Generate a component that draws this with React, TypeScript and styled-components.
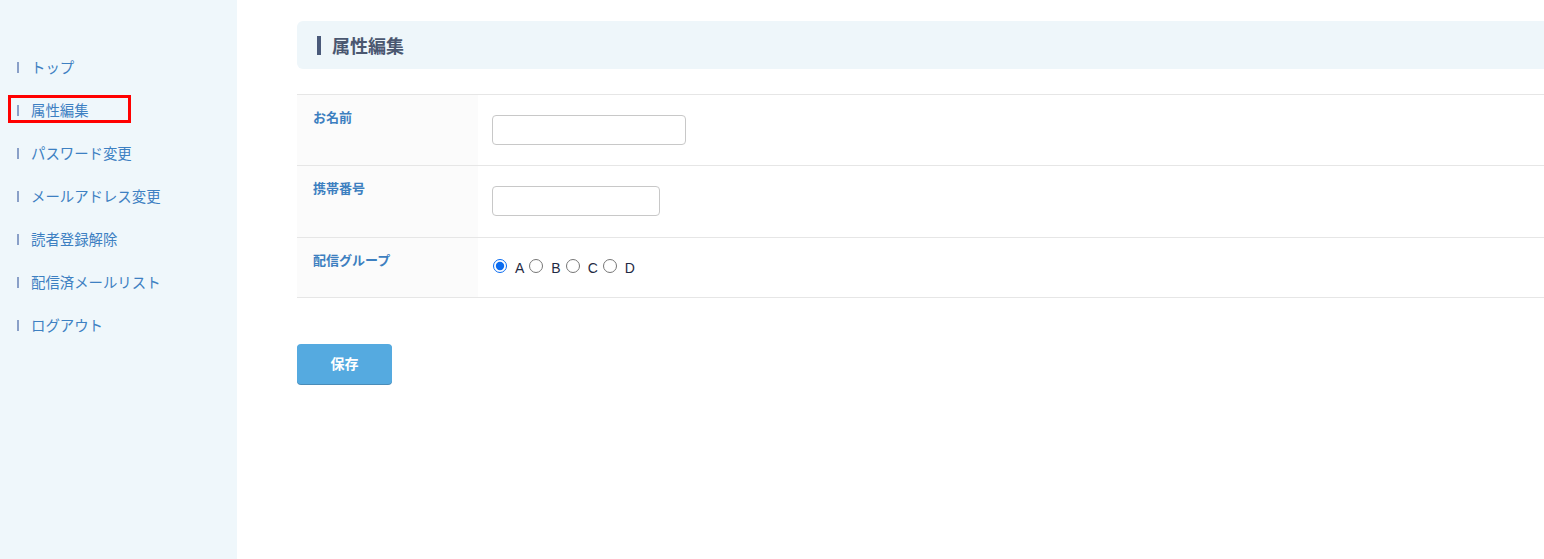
import React from "react";
import styled, { createGlobalStyle } from "styled-components";

const Global = createGlobalStyle`
  html, body { margin: 0; padding: 0; background: #fff; }
  body { font-family: "Noto Sans CJK JP", "Noto Sans", sans-serif; }
  * { box-sizing: border-box; }
`;

const Layout = styled.div`
  display: flex;
  width: 1544px;
  height: 559px;
  overflow: hidden;
`;

const Sidebar = styled.nav`
  width: 237px;
  flex: none;
  background: #eff7fb;
  padding-top: 53px;
`;

const NavList = styled.ul`
  list-style: none;
  margin: 0;
  padding: 0 0 0 9px;
  display: flex;
  flex-direction: column;
  align-items: flex-start;
  gap: 17px;
`;

const NavItem = styled.li<{ $active?: boolean }>`
  display: flex;
  align-items: center;
  width: ${(p) => (p.$active ? "121px" : "auto")};
  height: 26px;
  padding-left: 6px;
  font-size: 14.4px;
  color: #3d80c2;
  white-space: nowrap;
  outline: ${(p) => (p.$active ? "3px solid #f00" : "none")};
  outline-offset: -2px;
  &::before {
    content: "";
    flex: none;
    display: inline-block;
    width: 2px;
    height: 11px;
    margin: 3px 12px 0 2px;
    background: #8aa0c8;
  }
`;

const Main = styled.main`
  flex: 1;
  padding: 21px 0 0 60px;
  min-width: 0;
`;

const TitleBar = styled.div`
  height: 48px;
  background: #eef6fa;
  border-radius: 6px 0 0 6px;
  display: flex;
  align-items: center;
  padding-left: 20px;
  margin-right: -10px;
`;

const Title = styled.h2`
  margin: 0;
  font-size: 18px;
  font-weight: 700;
  color: #4a5770;
  display: flex;
  align-items: center;
  &::before {
    content: "";
    width: 4px;
    height: 19px;
    background: #4a5a7a;
    margin-right: 11px;
  }
`;

const Table = styled.div`
  margin-top: 25px;
  border-top: 1px solid #e6e6e6;
`;

const Row = styled.div<{ $h: number }>`
  display: grid;
  grid-template-columns: 181px 1fr;
  height: ${(p) => p.$h}px;
  border-bottom: 1px solid #e6e6e6;
`;

const Label = styled.div`
  background: #fbfbfb;
  padding: 12px 0 0 16px;
  font-size: 13px;
  font-weight: 700;
  color: #3d7fc0;
`;

const Cell = styled.div<{ $top: number }>`
  padding: ${(p) => p.$top}px 0 0 14px;
  display: flex;
  align-items: flex-start;
`;

const TextInput = styled.input<{ $w: number }>`
  width: ${(p) => p.$w}px;
  height: 30px;
  border: 1px solid #c8c8c8;
  border-radius: 4px;
  background: #fff;
  outline: none;
`;

const Radios = styled.div`
  display: flex;
  align-items: center;
  font-family: "Liberation Sans", Arial, sans-serif;
  font-size: 14px;
  color: #1f2a44;
`;

const RadioLabel = styled.label`
  display: inline-flex;
  align-items: center;
`;

const Radio = styled.input`
  width: 14px;
  height: 14px;
  margin: 0 8px 0 1px;
  accent-color: #0b6cf0;
`;

const RadioText = styled.span`
  margin-top: 4px;
  margin-right: 4px;
`;

const SaveButton = styled.button`
  margin-top: 46px;
  width: 95px;
  height: 40px;
  padding: 0 0 3px;
  border: none;
  border-radius: 4px;
  background: #55aae0;
  box-shadow: 0 1px 0 #4a8cb8;
  color: #fff;
  font-family: "Noto Sans CJK JP", sans-serif;
  font-size: 14px;
  font-weight: 700;
`;

const navItems = [
  "トップ",
  "属性編集",
  "パスワード変更",
  "メールアドレス変更",
  "読者登録解除",
  "配信済メールリスト",
  "ログアウト",
];

export default function App() {
  return (
    <>
      <Global />
      <Layout>
        <Sidebar>
          <NavList>
            {navItems.map((t) => (
              <NavItem key={t} $active={t === "属性編集"}>
                {t}
              </NavItem>
            ))}
          </NavList>
        </Sidebar>
        <Main>
          <TitleBar>
            <Title>属性編集</Title>
          </TitleBar>
          <Table>
            <Row $h={71}>
              <Label>お名前</Label>
              <Cell $top={20}>
                <TextInput $w={194} />
              </Cell>
            </Row>
            <Row $h={72}>
              <Label>携帯番号</Label>
              <Cell $top={20}>
                <TextInput $w={168} />
              </Cell>
            </Row>
            <Row $h={60}>
              <Label>配信グループ</Label>
              <Cell $top={18}>
                <Radios>
                  {["A", "B", "C", "D"].map((g) => (
                    <RadioLabel key={g}>
                      <Radio type="radio" name="group" defaultChecked={g === "A"} />
                      <RadioText>{g}</RadioText>
                    </RadioLabel>
                  ))}
                </Radios>
              </Cell>
            </Row>
          </Table>
          <SaveButton>保存</SaveButton>
        </Main>
      </Layout>
    </>
  );
}
